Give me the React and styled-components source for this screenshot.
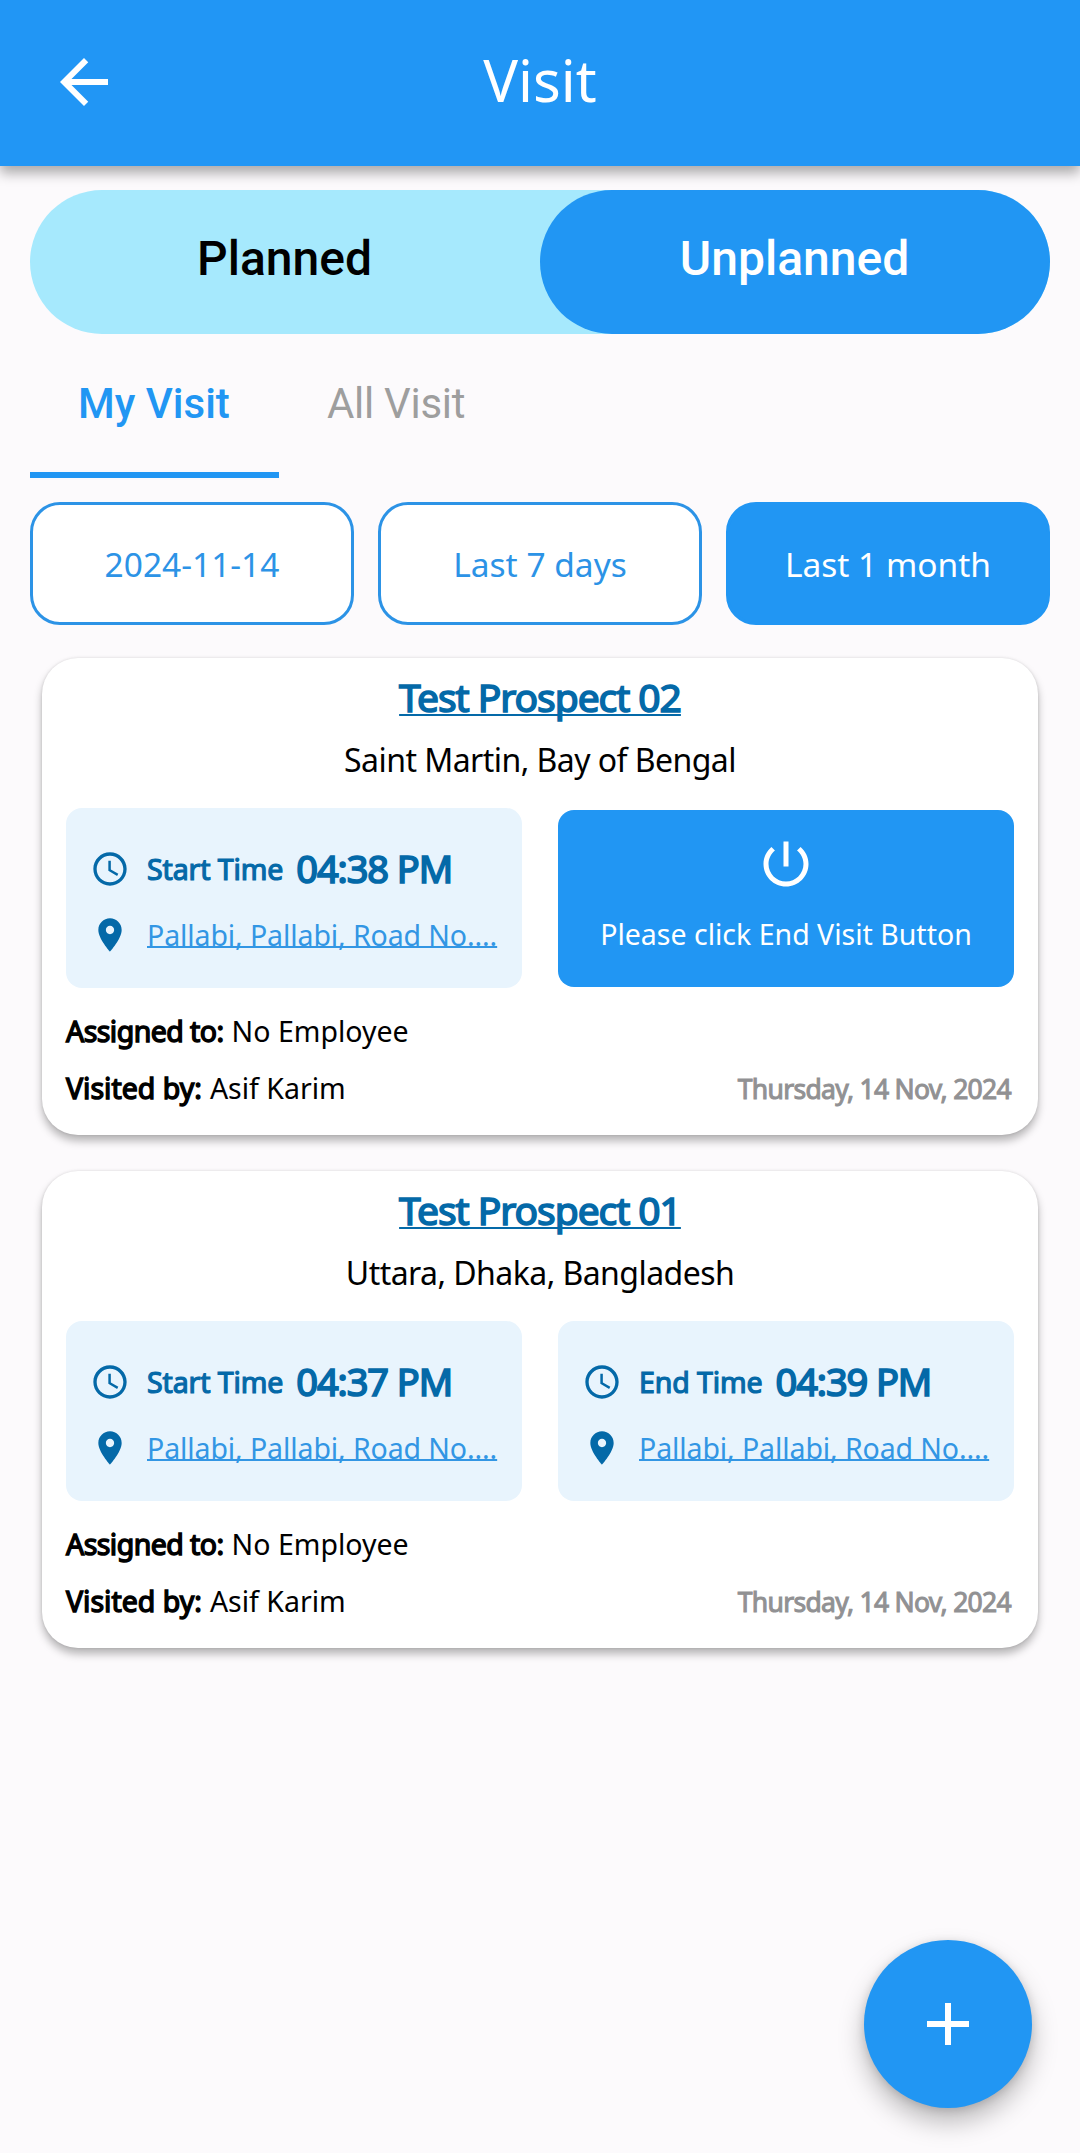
import React from 'react';
import styled, { createGlobalStyle } from 'styled-components';

const GlobalStyle = createGlobalStyle`
  * {
    box-sizing: border-box;
  }

  body {
    margin: 0;
    background: #fcfafc;
    font-family: 'Noto Sans', 'Open Sans', sans-serif;
  }

  button {
    border: 0;
    padding: 0;
    background: none;
    font: inherit;
  }
`;

const Screen = styled.div`
  position: relative;
  display: flex;
  flex-direction: column;
  width: 1080px;
  height: 2153px;
  overflow: hidden;
`;

const Header = styled.header`
  display: grid;
  grid-template-columns: 72px 1fr 72px;
  align-items: center;
  flex: none;
  height: 166px;
  padding: 0 48px 2px;
  background: #2196f5;
  color: #fff;
  box-shadow: 0 7px 12px rgba(0, 0, 0, 0.33);
`;

const HeaderTitle = styled.h1`
  margin: 0;
  padding-bottom: 5px;
  font-size: 58px;
  font-weight: 400;
  line-height: 72px;
  text-align: center;
`;

const Icon = styled.svg`
  display: block;
  flex: none;
  width: ${(props) => props.$size}px;
  height: ${(props) => props.$size}px;
  fill: currentColor;
`;

const BackButton = styled.button`
  color: #fff;
`;

const Toggle = styled.div`
  display: flex;
  flex: none;
  height: 144px;
  margin: 24px 30px 0;
  border-radius: 72px;
  background: #a6e9fd;
`;

const ToggleOption = styled.button`
  flex: 1;
  padding: 0 1px 8px 0;
  border-radius: 72px;
  background: ${(props) => (props.$active ? '#2196f3' : 'transparent')};
  color: ${(props) => (props.$active ? '#fff' : '#000')};
  font-family: Roboto, sans-serif;
  font-size: 48px;
  font-weight: 500;
`;

const Tabs = styled.nav`
  display: flex;
  flex: none;
  height: 144px;
  padding: 0 30px;
`;

const Tab = styled.button`
  min-width: 249px;
  padding: 1px 48px 0;
  border-bottom: 6px solid ${(props) => (props.$active ? '#2196f3' : 'transparent')};
  color: ${(props) => (props.$active ? '#2196f3' : '#9e9e9e')};
  font-family: Roboto, sans-serif;
  font-size: 42px;
  font-weight: ${(props) => (props.$active ? 500 : 400)};
  letter-spacing: ${(props) => (props.$active ? 0 : '-0.3px')};
  text-align: left;
`;

const Filters = styled.div`
  display: grid;
  grid-template-columns: repeat(3, 1fr);
  gap: 24px;
  margin: 24px 30px 0;
`;

const FilterButton = styled.button`
  height: 123px;
  padding-top: 1px;
  border: 3px solid ${(props) => (props.$active ? '#2196f3' : '#2c93e6')};
  border-radius: 30px;
  background: ${(props) => (props.$active ? '#2196f3' : '#fff')};
  color: ${(props) => (props.$active ? '#fff' : '#2c93e6')};
  font-size: 33.5px;
`;

const Visits = styled.main`
  display: flex;
  flex-direction: column;
  gap: 36px;
  margin: 33px 42px 0;
`;

const Card = styled.article`
  height: 477px;
  padding: 11px 24px 0;
  border-radius: 36px;
  background: #fff;
  box-shadow: 0 6px 9px rgba(0, 0, 0, 0.28), 0 0 3px rgba(0, 0, 0, 0.12);
`;

const Prospect = styled.h2`
  margin: 0;
  color: #0469a8;
  font-size: 39px;
  font-weight: 400;
  line-height: 56px;
  letter-spacing: -1.05px;
  text-align: center;
  text-decoration: underline 2px;
  text-decoration-skip-ink: none;
  text-underline-offset: 2px;
  -webkit-text-stroke: 1.6px currentColor;
`;

const Place = styled.p`
  margin: 12px 0 0;
  font-size: 32px;
  line-height: 46px;
  letter-spacing: -0.55px;
  text-align: center;
`;

const Boxes = styled.div`
  display: grid;
  grid-template-columns: repeat(2, minmax(0, 1fr));
  align-items: center;
  gap: 36px;
  margin-top: 25px;
`;

const TimeBox = styled.section`
  height: 180px;
  padding: 28px 24px 0;
  border-radius: 16px;
  background: #e8f4fd;
  color: #0469a8;
`;

const TimeRow = styled.div`
  display: flex;
  align-items: center;
  height: 66px;
  white-space: nowrap;
`;

const TimeLabel = styled.span`
  margin-left: 17px;
  font-size: 28.5px;
  letter-spacing: -0.1px;
  -webkit-text-stroke: 1.2px currentColor;
`;

const TimeValue = styled.span`
  margin-left: 13px;
  padding-bottom: 2px;
  font-size: 38px;
  letter-spacing: -1.1px;
  -webkit-text-stroke: 1.7px currentColor;
`;

const Location = styled.a`
  margin-left: 17px;
  color: #3296e4;
  font-size: 28.5px;
  letter-spacing: -0.1px;
  text-decoration: underline 1.5px;
  text-decoration-skip-ink: none;
  text-underline-offset: 0;
`;

const EndButton = styled.button`
  display: flex;
  flex-direction: column;
  align-items: center;
  height: 177px;
  padding-top: 24px;
  border-radius: 16px;
  background: #2196f3;
  color: #fff;
  font-size: 28.5px;
  line-height: 40px;
`;

const EndText = styled.span`
  margin-top: 20px;
`;

const Details = styled.div`
  margin-top: 15px;
  font-size: 28.5px;
  line-height: 57px;
`;

const DetailRow = styled.div`
  display: flex;
`;

const DetailLabel = styled.span`
  margin-right: 8px;
  letter-spacing: ${(props) => props.$spacing}px;
  -webkit-text-stroke: 1.4px currentColor;
`;

const VisitDate = styled.time`
  margin: 1px 3px 0 auto;
  color: #919193;
  font-size: 26.5px;
  letter-spacing: -0.7px;
  -webkit-text-stroke: 1px currentColor;
`;

const AddButton = styled.button`
  position: absolute;
  right: 48px;
  bottom: 45px;
  display: flex;
  align-items: center;
  justify-content: center;
  width: 168px;
  height: 168px;
  border-radius: 50%;
  background: #2196f3;
  color: #fff;
  box-shadow: 0 14px 26px rgba(0, 0, 0, 0.26), 0 2px 10px rgba(0, 0, 0, 0.14);
`;

const paths = {
  back: 'M20 11H7.83l5.59-5.59L12 4l-8 8 8 8 1.41-1.41L7.83 13H20v-2z',
  clock: 'M11.99 2C6.47 2 2 6.48 2 12s4.47 10 9.99 10C17.52 22 22 17.52 22 12S17.52 2 11.99 2zM12 20c-4.42 0-8-3.58-8-8s3.58-8 8-8 8 3.58 8 8-3.58 8-8 8zm.5-13H11v6l5.25 3.15.75-1.23-4.5-2.67z',
  pin: 'M12 2C8.13 2 5 5.13 5 9c0 5.25 7 13 7 13s7-7.75 7-13c0-3.87-3.13-7-7-7zm0 9.5c-1.38 0-2.5-1.12-2.5-2.5s1.12-2.5 2.5-2.5 2.5 1.12 2.5 2.5-1.12 2.5-2.5 2.5z',
  power: 'M13 3h-2v10h2V3zm4.83 2.17l-1.42 1.42C17.99 7.86 19 9.81 19 12c0 3.87-3.13 7-7 7s-7-3.13-7-7c0-2.19 1.01-4.14 2.58-5.42L6.17 5.17C4.23 6.82 3 9.26 3 12c0 4.97 4.03 9 9 9s9-4.03 9-9c0-2.74-1.23-5.18-3.17-6.83z',
  plus: 'M19 13h-6v6h-2v-6H5v-2h6V5h2v6h6v2z',
};

const Glyph = ({ name, size }) => (
  <Icon $size={size} viewBox="0 0 24 24" aria-hidden="true">
    <path d={paths[name]} />
  </Icon>
);

const visits = [
  {
    prospect: 'Test Prospect 02',
    place: 'Saint Martin, Bay of Bengal',
    start: '04:38 PM',
    end: null,
  },
  {
    prospect: 'Test Prospect 01',
    place: 'Uttara, Dhaka, Bangladesh',
    start: '04:37 PM',
    end: '04:39 PM',
  },
];

const Time = ({ label, value }) => (
  <TimeBox>
    <TimeRow>
      <Glyph name="clock" size={40} />
      <TimeLabel>{label}</TimeLabel>
      <TimeValue>{value}</TimeValue>
    </TimeRow>
    <TimeRow>
      <Glyph name="pin" size={40} />
      <Location>Pallabi, Pallabi, Road No....</Location>
    </TimeRow>
  </TimeBox>
);

const Visit = ({ visit }) => (
  <Card>
    <Prospect>{visit.prospect}</Prospect>
    <Place>{visit.place}</Place>
    <Boxes>
      <Time label="Start Time" value={visit.start} />
      {visit.end ? (
        <Time label="End Time" value={visit.end} />
      ) : (
        <EndButton>
          <Glyph name="power" size={60} />
          <EndText>Please click End Visit Button</EndText>
        </EndButton>
      )}
    </Boxes>
    <Details>
      <DetailRow>
        <DetailLabel $spacing={-0.55}>Assigned to:</DetailLabel>
        <span>No Employee</span>
      </DetailRow>
      <DetailRow>
        <DetailLabel $spacing={0}>Visited by:</DetailLabel>
        <span>Asif Karim</span>
        <VisitDate>Thursday, 14 Nov, 2024</VisitDate>
      </DetailRow>
    </Details>
  </Card>
);

const App = () => (
  <>
    <GlobalStyle />
    <Screen>
      <Header>
        <BackButton aria-label="Back">
          <Glyph name="back" size={72} />
        </BackButton>
        <HeaderTitle>Visit</HeaderTitle>
      </Header>
      <Toggle>
        <ToggleOption>Planned</ToggleOption>
        <ToggleOption $active>Unplanned</ToggleOption>
      </Toggle>
      <Tabs>
        <Tab $active>My Visit</Tab>
        <Tab>All Visit</Tab>
      </Tabs>
      <Filters>
        <FilterButton>2024-11-14</FilterButton>
        <FilterButton>Last 7 days</FilterButton>
        <FilterButton $active>Last 1 month</FilterButton>
      </Filters>
      <Visits>
        {visits.map((visit) => (
          <Visit key={visit.prospect} visit={visit} />
        ))}
      </Visits>
      <AddButton aria-label="Add visit">
        <Glyph name="plus" size={72} />
      </AddButton>
    </Screen>
  </>
);

export default App;
